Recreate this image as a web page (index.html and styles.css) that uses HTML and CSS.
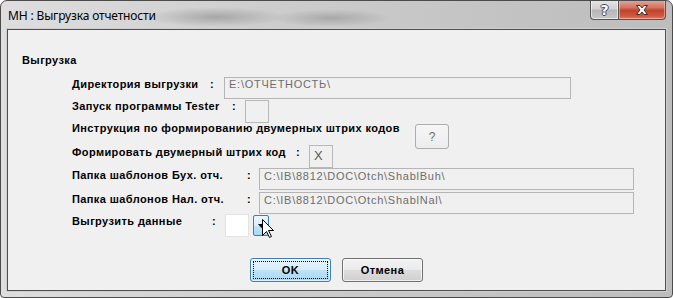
FILE: index.html
```html
<!DOCTYPE html>
<html lang="ru">
<head>
<meta charset="utf-8">
<title>МН : Выгрузка отчетности</title>
<link rel="stylesheet" href="styles.css">
</head>
<body>
<div class="window">
  <div class="titlebar">
    <span class="title">МН : Выгрузка отчетности</span>
    <div class="caption-btns">
      <div class="cb help"><span class="help-glyph">?</span></div>
      <div class="cb close">
        <svg width="16" height="12" viewBox="0 0 16 12"><path d="M2.5 1.5 H6 L8 4 L10 1.5 H13.5 L10 6 L13.5 10.5 H10 L8 8 L6 10.5 H2.5 L6 6 Z" fill="#fff" stroke="#4a2a26" stroke-width="1" stroke-linejoin="round"/></svg>
      </div>
    </div>
  </div>
  <div class="client">
    <div class="group-title">Выгрузка</div>

    <div class="row r1">
      <span class="lbl w1">Директория выгрузки</span><span class="colon c13">:</span>
      <div class="field f-dir">E:\ОТЧЕТНОСТЬ\</div>
    </div>

    <div class="row r2">
      <span class="lbl w2">Запуск программы Tester</span><span class="colon c12">:</span>
      <div class="box"></div>
    </div>

    <div class="row r3">
      <span class="lbl w3">Инструкция по формированию двумерных штрих кодов</span>
      <div class="qbtn">?</div>
    </div>

    <div class="row r4">
      <span class="lbl w4">Формировать двумерный штрих код</span><span class="colon c12">:</span>
      <div class="box xbox">X</div>
    </div>

    <div class="row r5">
      <span class="lbl w5">Папка шаблонов Бух. отч.</span><span class="colon c11">:</span>
      <div class="field f-path">C:\IB\8812\DOC\Otch\ShablBuh\</div>
    </div>

    <div class="row r6">
      <span class="lbl w5">Папка шаблонов Нал. отч.</span><span class="colon c11">:</span>
      <div class="field f-path">C:\IB\8812\DOC\Otch\ShablNal\</div>
    </div>

    <div class="row r7">
      <span class="lbl w7">Выгрузить данные</span><span class="colon c12">:</span>
      <div class="box white"></div>
      <div class="drop">
        <svg width="7" height="4" viewBox="0 0 7 4"><path d="M0 0 H7 L3.5 4 Z" fill="#000"/></svg>
        <svg class="cursor" width="13" height="20" viewBox="0 0 13 20"><path d="M0.5 0.5 V16.5 L4.5 12.5 L7.5 18.5 L9.5 17.5 L6.5 11.5 H11.5 Z" fill="#fff" stroke="#000" stroke-width="1" stroke-linejoin="miter"/></svg>
      </div>
    </div>

    <div class="buttons">
      <button class="btn ok"><span class="focus">OK</span></button>
      <button class="btn">Отмена</button>
    </div>
  </div>
</div>
</body>
</html>
```

FILE: styles.css
```css
html, body {
  margin: 0;
  padding: 0;
  background: #ffffff;
}

.window {
  box-sizing: border-box;
  width: 673px;
  height: 298px;
  border: 1px solid #4b4b4b;
  border-radius: 7px 7px 4px 4px;
  background:
    radial-gradient(ellipse 70px 10px at 215px 16px, rgba(90,90,90,0.35), rgba(90,90,90,0) 100%),
    radial-gradient(ellipse 60px 9px at 330px 17px, rgba(90,90,90,0.30), rgba(90,90,90,0) 100%),
    linear-gradient(to right, #dedede 0, #cdcdcd 40%, #c3c3c3 75%, #bdbdbd 100%);
  display: flex;
  flex-direction: column;
  overflow: hidden;
  font-family: "Liberation Sans", Arial, sans-serif;
}

.titlebar {
  height: 28px;
  display: flex;
  justify-content: space-between;
  align-items: flex-start;
  flex: none;
}

.title {
  font-family: "Noto Sans", "Open Sans", sans-serif;
  font-size: 12px;
  line-height: 16px;
  color: #000;
  margin: 7px 0 0 7px;
  letter-spacing: -0.15px;
}

.caption-btns {
  display: flex;
  margin: -1px 6px 0 0;
}

.cb {
  box-sizing: border-box;
  height: 20px;
  border: 1px solid #555;
  border-top: none;
  display: flex;
  align-items: center;
  justify-content: center;
}

.help {
  width: 28px;
  border-radius: 0 0 0 4px;
  border-right: none;
  background: linear-gradient(to bottom, #e6e6e6 0, #d2d2d2 45%, #b6b6b6 55%, #c8c8c8 100%);
  box-shadow: inset 0 0 0 1px rgba(255,255,255,0.55);
}

.help-glyph {
  font-family: "DejaVu Sans", sans-serif;
  font-weight: bold;
  font-size: 14px;
  line-height: 14px;
  color: #fff;
  text-shadow: 1px 0 0 #4a4a4a, -1px 0 0 #4a4a4a, 0 1px 0 #4a4a4a, 0 -1px 0 #4a4a4a;
}

.close {
  width: 48px;
  border-radius: 0 0 4px 0;
  background: linear-gradient(to bottom, #e9a699 0, #d4725f 40%, #c0432c 55%, #cf5a40 85%, #dc8270 100%);
  box-shadow: inset 0 0 0 1px rgba(255,210,200,0.5);
}

.client {
  box-sizing: border-box;
  height: 262px;
  margin: 0 6px;
  border: 1px solid #4e4e4e;
  background: #f0f0f0;
  box-shadow: 0 0 0 1px #cfcfcf;
  display: flex;
  flex-direction: column;
  font-size: 11px;
  line-height: 13px;
  color: #000;
}

.group-title {
  font-weight: bold;
  letter-spacing: 0.4px;
  height: 13px;
  margin: 24px 0 0 14px;
}

.row {
  display: flex;
  align-items: flex-start;
  margin-left: 64px;
  flex: none;
}

.r1 { height: 23px; margin-top: 9px; }
.r2 { height: 24px; }
.r3 { height: 22px; }
.r4 { height: 23px; }
.r5 { height: 24px; }
.r6 { height: 22px; }
.r7 { height: 23px; }

.lbl {
  font-weight: bold;
  letter-spacing: 0.4px;
  white-space: nowrap;
  flex: none;
}

.r1 .lbl { margin-top: 2px; }
.r2 .lbl { margin-top: 1px; }
.r3 .lbl { margin-top: -1px; }
.r4 .lbl { margin-top: 1px; }
.r5 .lbl { margin-top: 1px; }
.r6 .lbl { margin-top: 1px; }
.r7 .lbl { margin-top: 1px; }

.w1 { width: 138px; }
.w2 { width: 160px; }
.w3 { width: 343px; }
.w4 { width: 224px; }
.w5 { width: 175px; }
.w7 { width: 140px; }

.colon {
  font-weight: bold;
  flex: none;
}
.r1 .colon { margin-top: 2px; }
.r2 .colon, .r4 .colon, .r5 .colon, .r6 .colon, .r7 .colon { margin-top: 1px; }

.c11 { width: 12px; }
.c12 { width: 13px; }
.c13 { width: 14px; }

.field {
  box-sizing: border-box;
  height: 22px;
  border: 1px solid #b5b5b5;
  background: #f0f0f0;
  color: #6d6d6d;
  letter-spacing: 0.75px;
  padding: 0 0 0 4px;
  white-space: nowrap;
  flex: none;
}
.f-dir { width: 347px; margin-top: 1px; }
.f-path { width: 375px; padding-top: 1px; }

.box {
  box-sizing: border-box;
  width: 24px;
  height: 23px;
  border: 1px solid #b8b8b8;
  background: #f0f0f0;
  flex: none;
}
.r2 .box { margin-top: 1px; }

.xbox {
  color: #5a5a5a;
  font-size: 13px;
  line-height: 15px;
  padding: 2px 0 0 4px;
}

.white {
  background: #ffffff;
  border-color: #e3e3e3;
}

.qbtn {
  box-sizing: border-box;
  width: 34px;
  height: 25px;
  margin-top: 1px;
  border: 1px solid #adadad;
  border-radius: 3px;
  background: linear-gradient(to bottom, #f6f6f6, #ececec);
  color: #6d6d6d;
  font-size: 12px;
  line-height: 13px;
  text-align: center;
  padding-top: 6px;
  flex: none;
}

.drop {
  position: relative;
  box-sizing: border-box;
  width: 16px;
  height: 21px;
  margin: 1px 0 0 4px;
  border: 1px solid #3c7fb1;
  border-radius: 2px;
  background: linear-gradient(to bottom, #eaf6fd 0, #d9f0fc 50%, #bee6fd 51%, #a7d9f5 100%);
  display: flex;
  align-items: center;
  justify-content: center;
  flex: none;
}

.cursor {
  position: absolute;
  left: 8px;
  top: 3px;
}

.buttons {
  display: flex;
  gap: 11px;
  margin: 21px 0 0 242px;
}

.btn {
  box-sizing: border-box;
  width: 81px;
  height: 24px;
  margin: 0;
  padding: 0;
  border: 1px solid #707070;
  border-radius: 3px;
  background: linear-gradient(to bottom, #f2f2f2 0, #ebebeb 50%, #dddddd 51%, #cfcfcf 100%);
  box-shadow: inset 0 0 0 1px rgba(255,255,255,0.7);
  font-family: "Liberation Sans", Arial, sans-serif;
  font-weight: bold;
  font-size: 11px;
  letter-spacing: 0.4px;
  color: #000;
  display: flex;
  align-items: center;
  justify-content: center;
}

.ok {
  border-color: #3c7fb1;
  background: linear-gradient(to bottom, #e5f4fc 0, #d5edfa 50%, #bde3f7 51%, #a9d9f2 100%);
  box-shadow: inset 0 0 0 1px rgba(255,255,255,0.6);
  position: relative;
}

.focus {
  box-sizing: border-box;
  width: 75px;
  height: 18px;
  border: 1px dotted #000;
  display: flex;
  align-items: center;
  justify-content: center;
}
```
